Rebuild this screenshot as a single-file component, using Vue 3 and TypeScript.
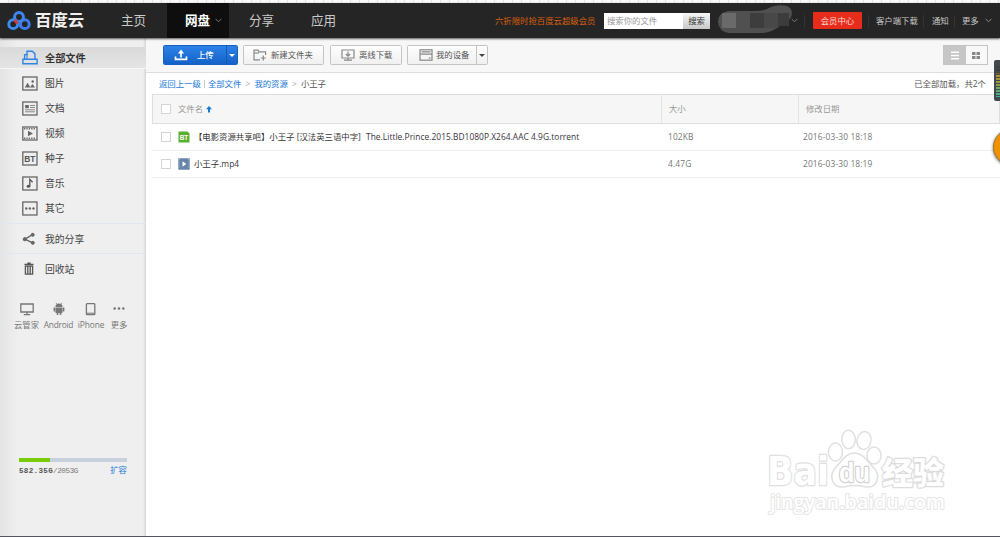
<script setup lang="ts">
interface NavItem { label: string; active?: boolean }
interface SideItem { label: string; icon: string; active?: boolean }
interface FileRow { name: string; latin: string; kind: 'bt' | 'video'; size: string; date: string }

const nav: NavItem[] = [
  { label: '主页' },
  { label: '网盘', active: true },
  { label: '分享' },
  { label: '应用' },
]
const side: SideItem[] = [
  { label: '全部文件', icon: 'all', active: true },
  { label: '图片', icon: 'image' },
  { label: '文档', icon: 'doc' },
  { label: '视频', icon: 'video' },
  { label: '种子', icon: 'bt' },
  { label: '音乐', icon: 'music' },
  { label: '其它', icon: 'other' },
]
const files: FileRow[] = [
  { name: '【电影资源共享吧】小王子 [汉法英三语中字]', latin: 'The.Little.Prince.2015.BD1080P.X264.AAC 4.9G.torrent', kind: 'bt', size: '102KB', date: '2016-03-30 18:18' },
  { name: '小王子', latin: '.mp4', kind: 'video', size: '4.47G', date: '2016-03-30 18:19' },
]
const used = 582.35
const total = 2053
</script>

<template>
  <div class="page">
    <div class="strip"></div>
    <header class="top">
      <div class="logo">
        <svg width="24" height="20" viewBox="0 0 24 20" fill="none" stroke-width="3">
          <circle cx="6.2" cy="13.2" r="4.4" stroke="#3b8cf0" />
          <circle cx="17.8" cy="13.2" r="4.4" stroke="#3b7cf0" />
          <circle cx="12" cy="6" r="4.4" stroke="#3f86f2" />
          <path d="M10 10.6 L14.6 16.2" stroke="#3b7cf0" />
          <path d="M7.8 8.8 L10.4 12.6" stroke="#d83a35" />
        </svg>
        <span>百度云</span>
      </div>
      <nav class="nav">
        <a v-for="n in nav" :key="n.label" :class="{ active: n.active }">
          <span>{{ n.label }}</span>
          <svg v-if="n.active" width="7" height="5" viewBox="0 0 7 5"><path d="M.6 .8 L3.5 3.8 L6.4 .8" fill="none" stroke="#777" /></svg>
        </a>
      </nav>
      <a class="promo">六折限时抢百度云超级会员</a>
      <div class="search"><span class="field">搜索你的文件</span><span class="go">搜索</span></div>
      <div class="user">
        <svg width="76" height="30" viewBox="0 0 76 30">
          <path d="M11 6 H38 Q48 6 54 2 Q61 -1 70 1 Q77 4 74 12 Q72 17 64 20 Q56 27 46 28 H12 Q2 27 1 17 Q1 8 11 6Z" fill="#505050" />
          <rect x="5" y="8" width="14" height="15" fill="#6a6a6a" /><rect x="19" y="8" width="14" height="15" fill="#505050" />
          <rect x="33" y="8" width="14" height="15" fill="#3d3d3d" /><rect x="47" y="8" width="14" height="15" fill="#484848" /><rect x="61" y="8" width="11" height="13" fill="#3c3c3c" />
        </svg>
        <svg class="chev" width="7" height="5" viewBox="0 0 7 5"><path d="M.6 .8 L3.5 3.8 L6.4 .8" fill="none" stroke="#777" /></svg>
      </div>
      <i class="bar"></i>
      <a class="vip">会员中心</a>
      <i class="bar b2"></i>
      <a class="lk">客户端下载</a>
      <i class="bar b3"></i>
      <a class="lk l2">通知</a>
      <i class="bar b3"></i>
      <a class="lk l3">更多</a>
      <svg class="chev2" width="7" height="5" viewBox="0 0 7 5"><path d="M.6 .8 L3.5 3.8 L6.4 .8" fill="none" stroke="#888" /></svg>
    </header>

    <div class="body">
      <aside class="side">
        <ul class="cats">
          <li v-for="s in side" :key="s.icon" :class="{ active: s.active }">
            <svg width="16" height="15" viewBox="0 0 16 15" fill="none" stroke="#666" stroke-width="1.3">
              <template v-if="s.icon === 'all'">
                <g stroke="#2e86e6" stroke-width="1.4">
                  <path d="M2.6 9 V4.6 H5 V1.3 H10.4 L13 3.9 V9" />
                  <path d="M5 4 V9" stroke-width="1.1" />
                  <path d="M.9 9.2 H15.1 V13.8 H.9Z" />
                </g>
              </template>
              <template v-else>
                <rect x=".8" y="1" width="14.2" height="13" />
                <g v-if="s.icon === 'image'" fill="#666" stroke="none"><path d="M2.8 11.5 L5.6 6.8 L8.3 11.5Z" /><path d="M8 11.5 L10.4 8 L13 11.5Z" /><circle cx="10.7" cy="5.5" r="1.2" /></g>
                <g v-else-if="s.icon === 'doc'" stroke-width="1"><rect x="3.2" y="4" width="3.6" height="3.2" fill="#666" stroke="none" /><path d="M8 4.5 H13 M8 6.5 H13 M3 8.8 H13 M3 10.8 H13" stroke="#888" /></g>
                <g v-else-if="s.icon === 'video'"><path d="M6 4.8 V10.2 L11 7.5Z" fill="#666" stroke="none" /><path d="M2 2.7 H14 M2 12.3 H14" stroke-dasharray="1.3 1.1" stroke-width="1.4" /></g>
                <text v-else-if="s.icon === 'bt'" x="7.9" y="10.8" text-anchor="middle" class="bt-label">BT</text>
                <g v-else-if="s.icon === 'music'"><ellipse cx="6.5" cy="10.2" rx="1.8" ry="1.5" fill="#555" stroke="none" /><path d="M7.8 10 V3.4 L10.6 6.2" stroke="#555" /></g>
                <g v-else fill="#666" stroke="none"><circle cx="4.3" cy="7.5" r="1.2" /><circle cx="7.9" cy="7.5" r="1.2" /><circle cx="11.5" cy="7.5" r="1.2" /></g>
              </template>
            </svg>
            <span>{{ s.label }}</span>
          </li>
        </ul>
        <div class="extra">
          <svg width="14" height="14" viewBox="0 0 14 14" fill="#666" stroke="#666"><path d="M10.5 2.6 L3 7.2 L10.5 10.8" fill="none" stroke-width="1.4" /><circle cx="10.7" cy="2.8" r="1.5" /><circle cx="2.8" cy="7.2" r="1.6" /><circle cx="10.8" cy="10.8" r="1.5" /></svg>
          <span>我的分享</span>
        </div>
        <div class="extra">
          <svg width="14" height="14" viewBox="0 0 14 14" fill="none" stroke="#555"><path d="M2.5 2.5 H11.5 M5.3 1.2 H8.7" stroke-width="1.5" /><path d="M3.4 4.2 H10.6 V12.2 H3.4Z M5.8 4.5 V12 M8.2 4.5 V12" stroke-width="1.3" /></svg>
          <span>回收站</span>
        </div>
        <div class="apps">
          <div class="app a1">
            <svg width="14" height="14" viewBox="0 0 14 14" fill="none" stroke="#777" stroke-width="1.3"><path d="M.8 2 H13.2 V10 H.8Z" /><path d="M7 10 V12 M3.8 12.6 H10.2" /></svg>
            <span>云管家</span>
          </div>
          <div class="app a2">
            <svg width="14" height="14" viewBox="0 0 14 14" fill="#777"><path d="M3.4 5 Q3.4 1.8 7 1.6 Q10.6 1.8 10.6 5Z" /><path d="M4 .8 L5.2 2.6 M10 .8 L8.8 2.6" stroke="#777" stroke-width=".7" /><rect x="3.4" y="5.5" width="7.2" height="5.4" rx=".7" /><rect x="1.6" y="5.2" width="1.4" height="4.4" rx=".7" /><rect x="11" y="5.2" width="1.4" height="4.4" rx=".7" /><rect x="4.7" y="9.5" width="1.6" height="3.6" rx=".7" /><rect x="7.7" y="9.5" width="1.6" height="3.6" rx=".7" /></svg>
            <span>Android</span>
          </div>
          <div class="app a3">
            <svg width="14" height="14" viewBox="0 0 14 14" fill="none" stroke="#777" stroke-width="1.3"><rect x="2.4" y="1.7" width="8.4" height="11" rx=".8" /><path d="M3 11.2 H10.5" stroke-width="1" /></svg>
            <span>iPhone</span>
          </div>
          <div class="app a4">
            <svg width="14" height="14" viewBox="0 0 14 14" fill="#777"><circle cx="2.7" cy="6.5" r="1.3" /><circle cx="7" cy="6.5" r="1.3" /><circle cx="11.3" cy="6.5" r="1.3" /></svg>
            <span>更多</span>
          </div>
        </div>
        <div class="quota">
          <div class="track"><div class="fill" :style="{ width: (used / total) * 100 + '%' }"></div></div>
          <div class="nums"><span><b>{{ used }}G</b>/{{ total }}G</span><a>扩容</a></div>
        </div>
      </aside>

      <main class="main">
        <div class="tools">
          <a class="btn up">
            <svg width="14" height="12" viewBox="0 0 14 12" fill="none" stroke="#fff" stroke-width="1.7"><path d="M1.5 7.5 V10.4 H12.5 V7.5" /><path d="M7 8.5 V3" /><path d="M3.9 4.4 L7 .6 L10.1 4.4Z" fill="#fff" stroke="none" /></svg>
            <span>上传</span><i class="drop"><b></b></i>
          </a>
          <a class="btn new">
            <svg width="14" height="12" viewBox="0 0 14 12" fill="none" stroke="#888" stroke-width="1.2"><path d="M7 10.8 H1 V1.2 H5 L6.2 2.8 H12.6 V6" /><path d="M1 4 H6" /><path d="M10.3 6.5 V11.5 M7.8 9 H12.8" /></svg>
            <span>新建文件夹</span>
          </a>
          <a class="btn off">
            <svg width="14" height="12" viewBox="0 0 14 12" fill="none" stroke="#888" stroke-width="1.2"><path d="M1 1 H13 V9 H1Z" /><path d="M7 2.5 V7 M4.8 5 L7 7.2 L9.2 5 M7 9 V11 M3 11.2 H11" /></svg>
            <span>离线下载</span>
          </a>
          <a class="btn dev">
            <svg width="14" height="12" viewBox="0 0 14 12" fill="none" stroke="#888" stroke-width="1.2"><rect x="1" y=".8" width="12" height="10.4" /><path d="M2.5 2.8 H11.5 M1 5.2 H13" /><path d="M9.8 9 H11.5" /></svg>
            <span>我的设备</span><i class="drop"><b></b></i>
          </a>
          <div class="views">
            <i class="on"><svg width="10" height="9" viewBox="0 0 10 9"><path d="M1 1.2 H9 M1 4.5 H9 M1 7.8 H9" stroke="#fff" stroke-width="1.5" /></svg></i>
            <i><svg width="10" height="9" viewBox="0 0 10 9" fill="#888"><path d="M1 1 H4.5 V4 H1Z M5.5 1 H9 V4 H5.5Z M1 5 H4.5 V8 H1Z M5.5 5 H9 V8 H5.5Z" /></svg></i>
          </div>
        </div>
        <div class="crumbs">
          <a>返回上一级</a><i class="pipe"></i><a>全部文件</a><em>&gt;</em><a>我的资源</a><em>&gt;</em><span>小王子</span>
          <span class="loaded">已全部加载，共2个</span>
        </div>
        <div class="row head">
          <div class="c1"><i class="check"></i><span>文件名</span><svg width="6" height="7" viewBox="0 0 6 7"><path d="M3 0 L6 3.2 H4 V6.5 H2 V3.2 H0Z" fill="#1a7ad9" /></svg></div>
          <div class="c2">大小</div>
          <div class="c3">修改日期</div>
        </div>
        <div v-for="f in files" :key="f.latin" class="row file">
          <div class="c1">
            <i class="check"></i>
            <svg v-if="f.kind === 'bt'" class="kind" width="12" height="12" viewBox="0 0 12 12"><path d="M.5 .5 H9.5 L11.5 2.5 V11.5 H.5Z" fill="#5bae2e" /><text x="5.9" y="8.6" text-anchor="middle" class="bt-file">BT</text></svg>
            <svg v-else class="kind" width="12" height="12" viewBox="0 0 12 12"><rect x=".3" y=".3" width="11.4" height="11.4" fill="#6683a8" /><path d="M1.5 1 V11 M10.5 1 V11" stroke="#8ea5c2" stroke-dasharray="1 1" /><path d="M4.5 3.3 V8.7 L8.3 6Z" fill="#fff" /></svg>
            <span class="cn" :class="f.kind">{{ f.name }}</span><span class="latin" :class="f.kind">{{ f.latin }}</span>
          </div>
          <div class="c2">{{ f.size }}</div>
          <div class="c3">{{ f.date }}</div>
        </div>
      </main>
    </div>

    <svg class="mark" width="190" height="96" viewBox="0 0 190 96">
      <g fill="#fff" stroke="#e0e0e0" stroke-width="1.5" transform="translate(-1 -1)">
        <ellipse cx="75.5" cy="26" rx="7" ry="9" />
        <ellipse cx="88.5" cy="13.5" rx="6.8" ry="9.2" />
        <ellipse cx="104" cy="14.5" rx="7" ry="9" transform="rotate(12 104 14.5)" />
        <ellipse cx="114" cy="29.5" rx="7" ry="8.5" />
        <path d="M94 27 C103 27 107 35 113 41 C122 50 117 62 106 61 C98 59 91 59 84 61 C72 62 68 50 76 41 C82 35 86 27 94 27Z" />
      </g>
      <text x="6" y="58" textLength="62" lengthAdjust="spacingAndGlyphs" class="mk bai">Bai</text>
      <text x="78" y="55" textLength="31" lengthAdjust="spacingAndGlyphs" class="mk du">du</text>
      <text x="121" y="56.5" textLength="62" class="mk jy">经验</text>
      <text x="9" y="82" textLength="175" lengthAdjust="spacingAndGlyphs" class="mk url">jingyan.baidu.com</text>
    </svg>
    <div class="meter"><i></i></div>
    <div class="ball"></div>
    <div class="foot"></div>
  </div>
</template>

<style>
body { margin: 0; overflow: hidden; }
</style>
<style scoped>
* { box-sizing: border-box; }
i, em { font-style: normal; }
ul { list-style: none; margin: 0; padding: 0; }
svg { display: block; flex: none; }
.page { position: relative; width: 1000px; height: 537px; overflow: hidden; background: #fff; display: flex; flex-direction: column; font: 8.4px/12px "Open Sans", "Noto Sans CJK SC", sans-serif; color: #555; white-space: nowrap; }
.strip { height: 3px; flex: none; background: repeating-linear-gradient(90deg, #f8f8f8 0 8px, #e2e5e5 8px 9px); }
.top { height: 35px; flex: none; background: #252525; display: flex; align-items: center; position: relative; box-shadow: 0 1px 2px rgba(0, 0, 0, .65); z-index: 2; }
.logo { display: flex; align-items: center; width: 102px; padding-left: 7px; flex: none; color: #f0f0f0; }
.logo span { font-size: 16.4px; line-height: 24px; font-weight: 700; margin: -1px 0 0 4px; }
.nav { display: flex; height: 35px; flex: none; width: 393px; font-size: 12.6px; color: #c9c9c9; }
.nav a { display: flex; align-items: center; width: 62px; padding-left: 19px; line-height: 18px; }
.nav a:first-child { width: 65px; }
.nav a.active { background: #0e0e0e; color: #fff; font-weight: 700; padding-left: 18px; gap: 5px; }
.nav a:nth-child(3) { padding-left: 20px; }
.nav a:nth-child(4) { padding-left: 20px; }
.promo { width: 109px; color: #d95f0c; flex: none; }
.search { display: flex; width: 106px; height: 16px; flex: none; line-height: 16px; }
.field { width: 79px; background: #fff; color: #999; padding-left: 3px; }
.go { flex: 1; background: linear-gradient(#f6f6f6, #c8c8c8); color: #333; text-align: center; }
.user { display: flex; align-items: center; width: 94px; padding-left: 7px; flex: none; }
.user svg:first-child { margin-top: -2px; }
.chev { margin-left: -2px; }
.bar { width: 1px; height: 12px; background: #353535; flex: none; }
.vip { width: 49px; height: 17px; line-height: 17px; margin-left: 8px; background: #e82c1c; border-radius: 1px; color: #f5dcd8; text-align: center; flex: none; }
.b2 { margin-left: 6px; }
.lk { color: #c8c8c8; margin-left: 7px; width: 42px; flex: none; }
.b3 { margin-left: 5px; }
.l2, .l3 { width: 17px; margin-left: 8px; }
.l3 { margin-left: 7px; }
.chev2 { margin-left: 6px; }
.body { flex: 1; display: flex; min-height: 0; }
.side { width: 146px; flex: none; padding-top: 9px; background: linear-gradient(90deg, rgba(0, 0, 0, 0) 143px, rgba(0, 0, 0, .11) 146px), linear-gradient(90deg, #e4e4e4, #efefef 18px); }
.cats { height: 177px; border-bottom: 1px solid #e0e6ef; }
.cats li { height: 22px; margin-bottom: 3px; display: flex; align-items: center; padding-left: 22px; font-size: 9.8px; line-height: 14px; color: #444; }
.cats li span { margin: 2px 0 0 7px; }
.cats li.active span { margin-top: 1px; }
.cats li.active { background: linear-gradient(#dadada, #e4e4e4); border-bottom: 1px solid #f6f6f6; font-weight: 700; color: #333; font-size: 10.2px; }
.bt-label { font: 700 8.4px "Liberation Sans", sans-serif; fill: #555; stroke: none; }
.extra { height: 30px; border-bottom: 1px solid #e0e6ef; display: flex; align-items: center; padding-left: 22px; font-size: 9.8px; color: #444; }
.extra + .extra { border: 0; }
.extra span { margin: 2px 0 0 9px; }
.apps { display: flex; margin-top: 18px; color: #777; }
.app { display: flex; flex-direction: column; align-items: center; gap: 3px; }
.app span { font-size: 8.4px; }
.a1 { margin-left: 14px; width: 25px; }
.a2 { margin-left: 4px; width: 31px; letter-spacing: -.25px; }
.a3 { width: 34px; letter-spacing: -.1px; }
.a4 { width: 22px; }
.quota { width: 108px; margin: 127px 0 0 19px; }
.track { height: 4px; background: #c8d1db; }
.fill { height: 4px; background: #7acb08; }
.nums { display: flex; justify-content: space-between; align-items: center; margin-top: 3px; font: 7.6px/12px "Liberation Mono", monospace; letter-spacing: -.4px; color: #777; }
.nums b { color: #555; letter-spacing: .3px; }
.nums a { font: 8.4px/12px "Noto Sans CJK SC", sans-serif; letter-spacing: 0; color: #1f7ad8; margin-top: -4px; }
.main { flex: 1; min-width: 0; display: flex; flex-direction: column; }
.tools { height: 35px; flex: none; background: #f7f7f7; border-bottom: 1px solid #dedede; display: flex; align-items: center; padding-left: 17px; }
.btn { display: flex; align-items: center; height: 20px; border: 1px solid #c4c4c4; border-radius: 1.5px; background: linear-gradient(#fefefe, #f0f0f0); color: #555; margin-right: 6px; }
.btn span { margin-left: 4px; }
.up { width: 75px; padding-left: 10px; background: linear-gradient(#2d82e8, #1462c8); border-color: #1761c0; color: #fff; font-weight: 500; margin-right: 5px; }
.up span { margin-left: 9px; }
.new { width: 81px; padding-left: 9px; }
.off { width: 72px; padding-left: 10px; margin-right: 5px; }
.dev { width: 81px; padding-left: 11px; }
.dev span { margin-left: 3px; }
.drop { width: 11px; height: 18px; margin-left: auto; border-left: 1px solid #c4c4c4; display: flex; align-items: center; justify-content: center; }
.drop b { border: 3px solid transparent; border-top: 3px solid #444; border-bottom: 0; }
.up .drop { border-color: #1259b4; }
.up .drop b { border-top-color: #fff; }
.views { display: flex; margin-left: auto; margin-right: 12px; height: 20px; width: 45px; border: 1px solid #c4c4c4; }
.views i { flex: 1; display: flex; align-items: center; justify-content: center; background: #f8f8f8; }
.views i.on { background: #c6c6c6; }
.crumbs { height: 21px; flex: none; display: flex; align-items: center; padding: 1px 14px 0 13px; }
.crumbs a { color: #1a78d8; }
.pipe { width: 1px; height: 8px; background: #ccc; margin: 0 3px; }
.crumbs em { width: 13px; text-align: center; color: #aaa; }
.loaded { margin-left: auto; }
.row { display: flex; align-items: stretch; margin-left: 6px; flex: none; }
.row > div { display: flex; align-items: center; }
.head { height: 30px; border: 1px solid #dedede; background: #f6f6f6; color: #999; }
.c1 { width: 508px; padding-left: 8px; }
.c2 { width: 137px; padding-left: 7px; }
.c3 { flex: 1; padding-left: 5px; }
.head .c2, .head .c3 { border-left: 1px solid #e4e4e4; padding-left: 7px; }
.check { width: 10px; height: 10px; border: 1px solid #d4d4d4; background: #fff; flex: none; }
.head .check { margin-right: 7px; }
.head svg { margin-left: 3px; }
.file { height: 27px; border-bottom: 1px solid #ededed; color: #777; padding-left: 1px; }
.file .c2, .file .c3 { letter-spacing: .14px; }
.kind { margin: 0 4px 0 7px; }
.cn, .latin { color: #333; }
.cn.bt { width: 172px; }
.latin { letter-spacing: .04px; color: #3a3340; }
.bt-file { font: 700 6.4px "Liberation Sans", sans-serif; fill: #fff; }
.mark { position: absolute; left: 761px; top: 427px; }
.mk { fill: #fff; stroke: #e0e0e0; stroke-width: 2.4px; paint-order: stroke; stroke-linejoin: round; }
.bai { font: 700 39px "DejaVu Sans", sans-serif; }
.du { font: 700 27px "Liberation Sans", sans-serif; stroke: #d2d2d2; }
.jy { font: 900 31px "Noto Sans CJK SC", sans-serif; stroke: #dcdcdc; }
.mk.url { font: 600 20px "Open Sans", sans-serif; stroke-width: 2px; stroke: #e6e6e6; }
.meter { position: absolute; left: 994px; top: 60px; width: 8px; height: 41px; border-radius: 2px; background: #44484f; z-index: 3; padding: 6px 0 0 2px; }
.meter i { display: block; width: 4px; height: 31px; background: repeating-linear-gradient(transparent 0 2px, #44484f 2px 3px), linear-gradient(#38423e 20%, #b98f35 30%, #8fa04a 60%, #33b4a0); }
.ball { position: absolute; left: 993px; top: 129px; width: 36px; height: 36px; border-radius: 50%; background: #f29100; border: 1px solid #a47428; box-shadow: 0 1px 3px rgba(0, 0, 0, .6); }
.foot { position: absolute; left: 0; right: 0; bottom: 0; height: 1px; background: #555560; }
</style>
